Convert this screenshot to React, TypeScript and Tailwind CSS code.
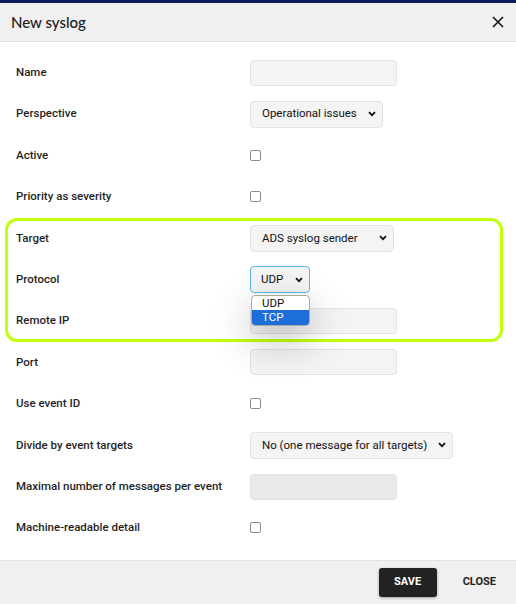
import React from "react";

const font = { fontFamily: "Roboto, 'Liberation Sans', sans-serif" };

function Chevron() {
  return (
    <svg width="8" height="6" viewBox="0 0 8 6" className="shrink-0">
      <path d="M1 1.2 L4 4.2 L7 1.2" fill="none" stroke="#111" strokeWidth="1.8" />
    </svg>
  );
}

function Input({ disabled }: { disabled?: boolean }) {
  return (
    <div
      className={`w-[147px] h-[26px] rounded-[4px] border border-[#e2e2e2] ${
        disabled ? "bg-[#e9e9e9]" : "bg-[#f4f4f4]"
      }`}
    />
  );
}

function Select({ value, width }: { value: string; width: string }) {
  return (
    <div
      className={`${width} h-[27px] rounded-[4px] border border-[#e2e2e2] bg-[#f4f4f4] flex items-center justify-between pl-[11px] pr-[6px] text-[11.5px] text-[#111]`}
    >
      <span>{value}</span>
      <Chevron />
    </div>
  );
}

function Checkbox() {
  return <div className="w-[11px] h-[11px] rounded-[2px] border border-[#8c8c8c] bg-white" />;
}

function Row({ label, children }: { label: string; children: React.ReactNode }) {
  return (
    <div className="h-[41.4px] flex items-center pl-4">
      <div className="w-[234px] text-[11.5px] font-medium text-[#1f1f1f]">{label}</div>
      {children}
    </div>
  );
}

export default function App() {
  return (
    <div className="w-[516px] h-[604px] flex flex-col bg-white overflow-hidden" style={font}>
      <div className="h-[3px] bg-[#0c1f5a]" />
      <div className="h-[39px] flex items-center justify-between pl-[11px] pr-[12px] bg-[#f0f0f0] border-b border-[#e3e3e3]">
        <h1 className="text-[15px] font-medium text-[#1c1c1c]" style={{ fontFamily: "Lato, sans-serif" }}>
          New syslog
        </h1>
        <svg width="12" height="12" viewBox="0 0 12 12">
          <path d="M1 1 L11 11 M11 1 L1 11" stroke="#111" strokeWidth="1.6" />
        </svg>
      </div>

      <div className="flex-1 pt-[10px]">
        <Row label="Name">
          <Input />
        </Row>
        <Row label="Perspective">
          <Select value="Operational issues" width="w-[133px]" />
        </Row>
        <Row label="Active">
          <Checkbox />
        </Row>
        <Row label="Priority as severity">
          <Checkbox />
        </Row>

        {/* highlighted target block */}
        <div className="relative">
          <Row label="Target">
            <Select value="ADS syslog sender" width="w-[144px]" />
          </Row>
          <Row label="Protocol">
            <div className="relative">
              <div className="w-[60px] h-[27px] rounded-[4px] border-[1.5px] border-[#55b6ea] bg-[#f4f4f4] flex items-center justify-between pl-[10px] pr-[6px] text-[11.5px] text-[#111]">
                <span>UDP</span>
                <Chevron />
              </div>
              <div className="absolute z-10 left-[1px] top-[29px] w-[59px] rounded-[4px] border border-[#a9a9a9] bg-white overflow-hidden text-[11.5px] shadow-[0_14px_40px_rgba(0,0,0,0.28)]">
                <div className="h-[14px] leading-[14px] pl-[10px] text-[#111]">UDP</div>
                <div className="h-[15px] leading-[15px] pl-[10px] bg-[#1c6fd8] text-white">TCP</div>
              </div>
            </div>
          </Row>
          <Row label="Remote IP">
            <Input />
          </Row>
          <div className="absolute left-[5px] right-[13px] top-0 bottom-0 border-[3px] border-[#c2ff0a] rounded-[12px] pointer-events-none" />
        </div>

        <Row label="Port">
          <Input />
        </Row>
        <Row label="Use event ID">
          <Checkbox />
        </Row>
        <Row label="Divide by event targets">
          <Select value="No (one message for all targets)" width="w-[203px]" />
        </Row>
        <Row label="Maximal number of messages per event">
          <Input disabled />
        </Row>
        <Row label="Machine-readable detail">
          <Checkbox />
        </Row>
      </div>

      <div className="h-[44px] flex items-center justify-end gap-[26px] pr-[20px] bg-[#f0f0f0] border-t border-[#e3e3e3]">
        <button className="w-[58px] h-[29px] rounded-[3px] bg-[#222] text-white text-[11px] font-bold shadow-[0_1px_3px_rgba(0,0,0,0.35)]">
          SAVE
        </button>
        <button className="text-[11px] font-bold text-[#222]">CLOSE</button>
      </div>
    </div>
  );
}
